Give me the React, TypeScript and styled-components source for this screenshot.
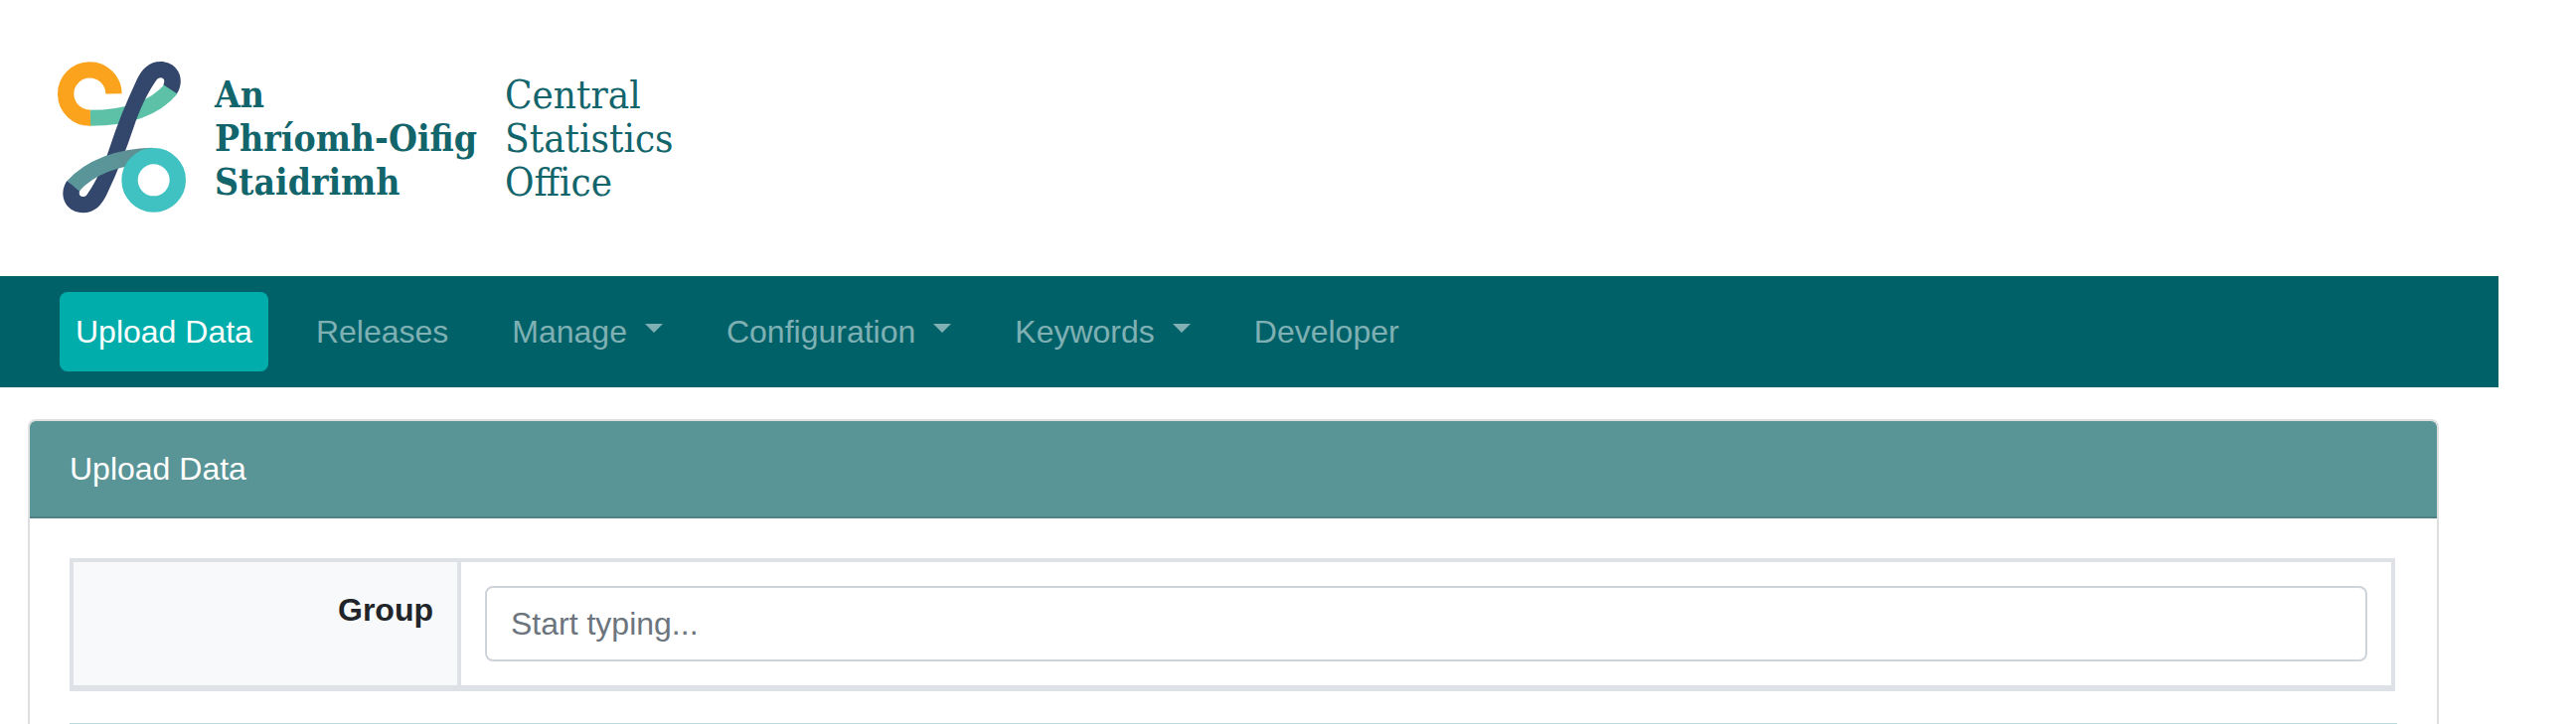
import React from 'react';
import styled, { createGlobalStyle } from 'styled-components';

const GlobalStyle = createGlobalStyle`
  *, *::before, *::after { box-sizing: border-box; }
  body {
    margin: 0;
    background: #fff;
    color: #212529;
    font-family: "Liberation Sans", Arial, sans-serif;
    font-size: 32px;
    line-height: 48px;
  }
`;

const Page = styled.div`
  padding-right: 3%;
`;

const Header = styled.header`
  display: flex;
  padding: 62px 58px;
`;

const Brand = styled.a`
  display: flex;
  align-items: center;
  gap: 28px;
  color: #12656b;
  text-decoration: none;
`;

const BrandName = styled.span<{ $strong?: boolean }>`
  font-family: "DejaVu Serif Condensed", "DejaVu Serif", serif;
  font-size: ${(p) => (p.$strong ? 37 : 40)}px;
  font-weight: ${(p) => (p.$strong ? 700 : 400)};
  line-height: 44px;
  white-space: nowrap;
`;

const NavBar = styled.nav`
  padding: 16px 60px;
  background: #006168;
`;

const NavList = styled.ul`
  display: flex;
  gap: 32px;
  margin: 0;
  padding: 0;
  list-style: none;
`;

const NavLink = styled.a<{ $active?: boolean }>`
  display: flex;
  align-items: center;
  gap: 18px;
  padding: 16px;
  border-radius: 8px;
  background: ${(p) => (p.$active ? '#00adab' : 'transparent')};
  color: ${(p) => (p.$active ? '#fff' : 'rgba(255, 255, 255, 0.5)')};
  text-decoration: none;
  white-space: nowrap;
`;

const Caret = styled.span`
  margin-bottom: 8px;
  border-top: 9px solid;
  border-right: 9px solid transparent;
  border-left: 9px solid transparent;
`;

const Card = styled.main`
  margin: 32px 60px 0 28px;
  border: 2px solid #dfdfdf;
  border-bottom: 0;
  border-radius: 8px 8px 0 0;
`;

const CardHeader = styled.h1`
  margin: 0;
  padding: 24px 40px;
  border-bottom: 2px solid #4e8284;
  border-radius: 6px 6px 0 0;
  background: #599496;
  color: #fff;
  font-size: 32px;
  font-weight: 400;
`;

const CardBody = styled.div`
  padding: 40px 40px 0;
`;

const FormTable = styled.table`
  width: calc(100% - 2px);
  table-layout: fixed;
  border: 4px solid #dee2e6;
  border-bottom-width: 6px;
  border-spacing: 0;
`;

const LabelCell = styled.th`
  width: 390px;
  padding: 24px;
  border-right: 4px solid #dee2e6;
  background: #f8f9fb;
  text-align: right;
  vertical-align: top;
`;

const FieldCell = styled.td`
  padding: 24px;
`;

const TextInput = styled.input`
  display: block;
  width: 100%;
  height: 76px;
  padding: 12px 24px;
  border: 2px solid #ced4da;
  border-radius: 8px;
  background: #fff;
  color: #495057;
  font: inherit;

  &::placeholder {
    color: #6c757d;
    opacity: 1;
  }
`;

const Divider = styled.hr`
  margin: 32px 0 0;
  border: 0;
  border-top: 1px solid #bcdadc;
`;

const LogoMark = () => (
  <svg width="130" height="154" viewBox="54 65 390 462" fill="none" aria-hidden="true">
    <defs>
      <linearGradient id="fold" x1="200" y1="0" x2="330" y2="0" gradientUnits="userSpaceOnUse">
        <stop offset="0" stopColor="#5a959a" />
        <stop offset="1" stopColor="#5f8d90" />
      </linearGradient>
    </defs>
    <path d="M152 235.5C250 235 340 215 397 147" stroke="#5cc1a6" strokeWidth="48" />
    <path d="M223.5 162A72.5 72.5 0 1 0 153 235" stroke="#fba31d" strokeWidth="49" />
    <path
      d="M414 162C443 115 413 65 365 65C330 65 308 88 293 120C260 190 233 258 211 325C193 378 174 420 145 463C140 471 136 473 130 473C120 473 116 464 122 452L82 425C52 472 82 522 130 522C165 522 187 499 202 467C235 397 262 329 284 262C302 209 321 167 350 124C355 116 359 114 365 114C375 114 379 123 373 135Z"
      fill="#33466b"
    />
    <path d="M101 441C150 385 240 350 340 349" stroke="url(#fold)" strokeWidth="48" />
    <circle cx="344" cy="423" r="72.5" stroke="#40c1c2" strokeWidth="49" />
  </svg>
);

const NAV_ITEMS = [
  { label: 'Upload Data', active: true },
  { label: 'Releases' },
  { label: 'Manage', menu: true },
  { label: 'Configuration', menu: true },
  { label: 'Keywords', menu: true },
  { label: 'Developer' },
];

export default function App() {
  return (
    <>
      <GlobalStyle />
      <Page>
        <Header>
          <Brand href="#">
            <LogoMark />
            <BrandName $strong lang="ga">
              An
              <br />
              Phríomh-Oifig
              <br />
              Staidrimh
            </BrandName>
            <BrandName>
              Central
              <br />
              Statistics
              <br />
              Office
            </BrandName>
          </Brand>
        </Header>
        <NavBar>
          <NavList>
            {NAV_ITEMS.map((item) => (
              <li key={item.label}>
                <NavLink href="#" $active={item.active} aria-current={item.active ? 'page' : undefined}>
                  {item.label}
                  {item.menu && <Caret />}
                </NavLink>
              </li>
            ))}
          </NavList>
        </NavBar>
        <Card>
          <CardHeader>Upload Data</CardHeader>
          <CardBody>
            <FormTable>
              <tbody>
                <tr>
                  <LabelCell scope="row">
                    <label htmlFor="group">Group</label>
                  </LabelCell>
                  <FieldCell>
                    <TextInput id="group" type="text" placeholder="Start typing..." />
                  </FieldCell>
                </tr>
              </tbody>
            </FormTable>
            <Divider />
          </CardBody>
        </Card>
      </Page>
    </>
  );
}
